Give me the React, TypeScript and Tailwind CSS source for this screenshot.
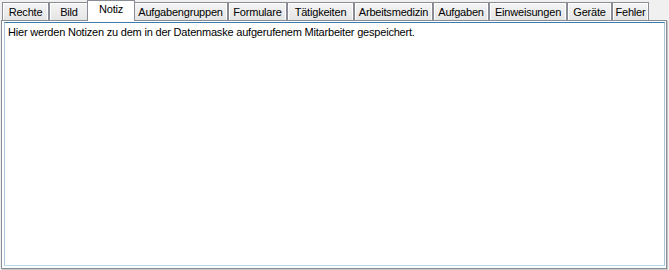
import React from "react";

type Tab = { label: string; w: string; active?: boolean };

const tabs: Tab[] = [
  { label: "Rechte", w: "w-[47px]" },
  { label: "Bild", w: "w-[40px]" },
  { label: "Notiz", w: "w-[48px]", active: true },
  { label: "Aufgabengruppen", w: "w-[95px]" },
  { label: "Formulare", w: "w-[59px]" },
  { label: "Tätigkeiten", w: "w-[67px]" },
  { label: "Arbeitsmedizin", w: "w-[79px]" },
  { label: "Aufgaben", w: "w-[56px]" },
  { label: "Einweisungen", w: "w-[78px]" },
  { label: "Geräte", w: "w-[45px]" },
  { label: "Fehler", w: "w-[37px]" },
];

export default function App() {
  return (
    <div
      className="w-[669px] h-[270px] bg-[#f0f0f0] flex flex-col text-[11px] tracking-[-0.2px] text-black overflow-hidden"
      style={{ fontFamily: '"Liberation Sans", Arial, sans-serif' }}
    >
      <div className="flex items-end h-[21px] pl-[2px]">
        {tabs.map((t) =>
          t.active ? (
            <div
              key={t.label}
              className={`${t.w} relative z-10 -mx-[2px] h-[21px] bg-white border-t border-l border-r border-[#898c95] flex justify-center pt-[2px] leading-[13px]`}
            >
              {t.label}
            </div>
          ) : (
            <div
              key={t.label}
              className={`${t.w} h-[19px] border-t border-l border-r border-[#898c95] bg-gradient-to-b from-[#f4f4f4] to-[#e4e4e4] shadow-[inset_1px_1px_0_#ffffff,inset_-1px_0_0_#ffffff] flex justify-center pt-[3px] leading-[13px]`}
            >
              {t.label}
            </div>
          )
        )}
      </div>
      <div className="-mt-[1px] ml-[1px] w-[666px] h-[249px] border border-[#898c95] bg-white shadow-[1px_1px_0_#c8c8c8] pt-[1px] pl-[2px] pr-[1px] pb-[2px] flex">
        <div className="flex-1 border border-[#abc6dd] border-t-[#3d7bad] border-b-[#b7d9ed] bg-white px-[3px] pt-[3px] leading-[13px]">
          Hier werden Notizen zu dem in der Datenmaske aufgerufenem Mitarbeiter gespeichert.
        </div>
      </div>
    </div>
  );
}
